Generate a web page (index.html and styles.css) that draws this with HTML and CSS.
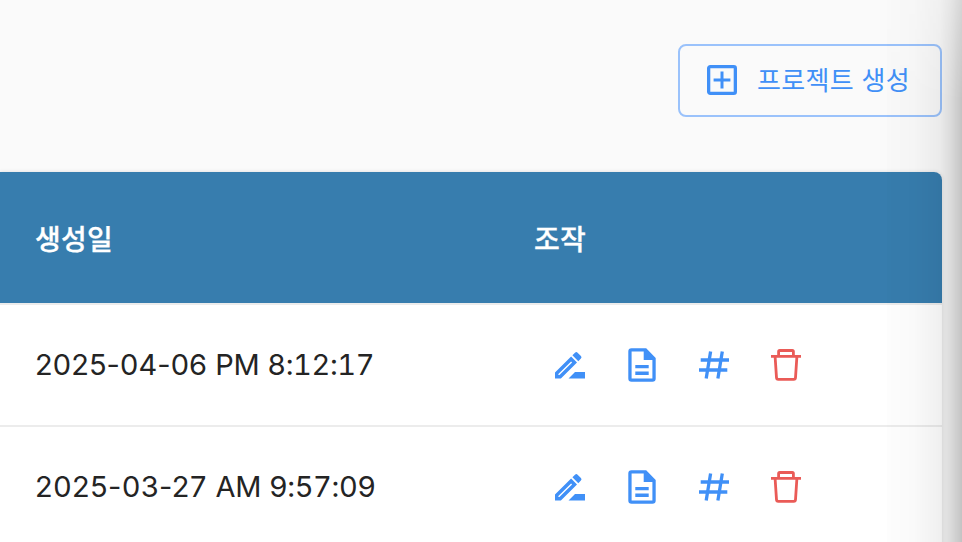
FILE: index.html
```html
<!DOCTYPE html>
<html lang="ko">
<head>
<meta charset="utf-8">
<title>프로젝트</title>
<link rel="stylesheet" href="styles.css">
</head>
<body>
<svg class="defs" aria-hidden="true">
  <symbol id="edit" viewBox="0 0 40 40">
    <path fill="currentColor" fill-rule="evenodd" d="M5 33.5V27.6L21.1 11.5L27 17.4L10.9 33.5ZM8.4 30.1H9.4L22.1 17.4L21.1 16.4L8.4 29.1ZM22.4 10.3L25 7.7Q26.3 6.4 27.6 7.7L30.9 11Q32.2 12.3 30.9 13.6L28.3 16.2ZM18.5 33.5L25 27H35V33.5Z"/>
  </symbol>
  <symbol id="doc" viewBox="0 0 40 40">
    <path fill="currentColor" fill-rule="evenodd" d="M9.5 3.3H24.2L33.7 13V33.4Q33.7 36.7 30.4 36.7H9.6Q6.3 36.7 6.3 33.4V6.6Q6.3 3.3 9.5 3.3ZM9.6 6.6V33.4H30.4V15H21.7V6.6ZM13.3 20H26.7V23.3H13.3ZM13.3 26.6H26.7V30H13.3Z"/>
  </symbol>
  <symbol id="hash" viewBox="0 0 40 40">
    <path fill="none" stroke="currentColor" stroke-width="3.3" d="M16.6 6.5L12.2 33.4M28.3 6.5L23.9 33.4M6.7 15H35M5 25H33.3"/>
  </symbol>
  <symbol id="trash" viewBox="0 0 40 40">
    <path fill="none" stroke="currentColor" stroke-width="2.8" stroke-linejoin="round" d="M5 11.4H35M12.6 11V6.6Q12.6 5.5 13.7 5.5H26.3Q27.4 5.5 27.4 6.6V11M9.1 11.5L10.5 32.7Q10.6 34.4 12.3 34.4H27.7Q29.4 34.4 29.5 32.7L30.9 11.5"/>
  </symbol>
</svg>
<main class="page">
  <div class="toolbar">
    <button class="create" type="button">
      <svg class="create-icon" viewBox="0 0 30 30"><rect x="1.65" y="1.65" width="26.7" height="26.7" rx="1.6" fill="none" stroke="currentColor" stroke-width="3.3"/><path fill="none" stroke="currentColor" stroke-width="3" d="M6.6 15H23.4M15 6.6V23.4"/></svg>
      <span>프로젝트 생성</span>
    </button>
  </div>
  <section class="table">
    <div class="row head"><div>생성일</div><div>조작</div></div>
    <div class="row">
      <div class="date"><span class="day tight">2025-04-06 </span>PM <span class="time">8:12:17</span></div>
      <div class="actions"><svg><use href="#edit"/></svg><svg><use href="#doc"/></svg><svg><use href="#hash"/></svg><svg class="danger"><use href="#trash"/></svg></div>
    </div>
    <div class="row">
      <div class="date"><span class="day">2025-03-27 </span>AM <span class="time">9:57:09</span></div>
      <div class="actions"><svg><use href="#edit"/></svg><svg><use href="#doc"/></svg><svg><use href="#hash"/></svg><svg class="danger"><use href="#trash"/></svg></div>
    </div>
  </section>
</main>
<div class="edge-shade"></div>
</body>
</html>
```
FILE: styles.css
```css
* { box-sizing: border-box; }
body {
  margin: 0;
  height: 542px;
  overflow: hidden;
  background: #fafafa;
  color: #242424;
  font-family: Inter, "Noto Sans CJK KR", sans-serif;
}
.defs { display: none; }
.page { padding: 44px 20px 0 0; }
.toolbar { display: flex; justify-content: flex-end; margin-bottom: 55px; }
.create {
  display: flex;
  align-items: center;
  gap: 20px;
  width: 264px;
  height: 73px;
  padding: 0 0 2px 27px;
  border: 2px solid #9ac2fb;
  border-radius: 8px;
  background: transparent;
  color: #4090f7;
  font-family: "Noto Sans CJK KR", sans-serif;
  font-size: 26px;
  line-height: 36px;
  letter-spacing: .3px;
  white-space: nowrap;
}
.create span { padding-bottom: 2px; }
.create-icon { width: 30px; height: 30px; flex: none; }
.table {
  border-top-right-radius: 8px;
  background: #fff;
  box-shadow: 0 0 4px rgba(0, 0, 0, .12);
}
.row {
  display: grid;
  grid-template-columns: 499px 1fr;
  align-items: center;
  height: 122px;
  padding-left: 35px;
  border-bottom: 2px solid #ececec;
}
.head {
  height: 133px;
  border-top-right-radius: 8px;
  background: #377dae;
  background-clip: padding-box;
  color: #fff;
  font-family: "Noto Sans CJK KR", sans-serif;
  font-size: 28px;
  font-weight: 500;
  letter-spacing: .2px;
  -webkit-text-stroke: .3px #fff;
}
.date {
  padding-bottom: 2px;
  font-size: 29px;
  letter-spacing: -.3px;
  white-space: nowrap;
}
.day { letter-spacing: .45px; }
.day.tight { letter-spacing: .08px; }
.time { font-variant-numeric: tabular-nums; letter-spacing: -.4px; }
.actions { display: flex; gap: 32px; padding-left: 16px; color: #4090f7; }
.actions svg { width: 40px; height: 40px; }
.actions .danger { color: #ea5b57; }
.edge-shade {
  position: absolute;
  top: 0;
  right: 0;
  width: 75px;
  height: 542px;
  background: linear-gradient(to right, rgba(0,0,0,.006), rgba(0,0,0,.02) 35%, rgba(0,0,0,.06) 70%, rgba(0,0,0,.12) 85%, rgba(0,0,0,.22));
  -webkit-mask-image: linear-gradient(rgba(0,0,0,.65), #000 100px);
  mask-image: linear-gradient(rgba(0,0,0,.65), #000 100px);
  pointer-events: none;
}
```
